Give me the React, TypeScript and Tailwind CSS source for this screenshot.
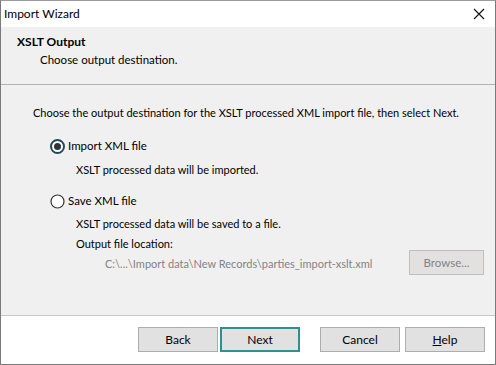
import React from "react";

const font = { fontFamily: 'Lato, "Noto Sans", sans-serif' };

function Radio({ checked }: { checked: boolean }) {
  return checked ? (
    <svg width="15" height="15" viewBox="0 0 15 15" className="shrink-0">
      <circle cx="7.5" cy="7.5" r="6.5" fill="#ffffff" stroke="#1f4a5b" strokeWidth="2" />
      <circle cx="7.5" cy="7.5" r="3.5" fill="#333333" />
    </svg>
  ) : (
    <svg width="15" height="15" viewBox="0 0 15 15" className="shrink-0">
      <circle cx="7.5" cy="7.5" r="6.5" fill="#ffffff" stroke="#333333" strokeWidth="1.2" />
    </svg>
  );
}

function Btn({ children, primary }: { children: React.ReactNode; primary?: boolean }) {
  return (
    <div
      className={
        "w-[80px] h-[25px] flex items-center justify-center bg-[#e1e1e1] text-[12px] text-black " +
        (primary ? "border-2 border-[#2a9294]" : "border border-[#adadad]")
      }
    >
      {children}
    </div>
  );
}

export default function App() {
  return (
    <div className="w-[496px] h-[365px] flex flex-col border border-[#7a7a7a] border-t-[#9a9a9a] bg-white text-[11.5px] text-black overflow-hidden whitespace-nowrap" style={font}>
      {/* Title bar */}
      <div className="h-[26px] flex items-center justify-between bg-white pl-[3px] pr-[8px]">
        <span className="text-[12px] leading-none">Import Wizard</span>
        <svg width="12" height="12" viewBox="0 0 12 12" className="mr-[2px]">
          <path d="M1 1 L11 11 M11 1 L1 11" stroke="#111" strokeWidth="1.1" />
        </svg>
      </div>
      {/* Header */}
      <div className="h-[58px] bg-[#f0f0f0] border-b border-[#b4b4b4] flex flex-col pl-[16px] pt-[7px]">
        <div className="font-bold text-[12px] leading-[16px]">XSLT Output</div>
        <div className="pl-[23px] mt-[2px] leading-[16px]">Choose output destination.</div>
      </div>
      {/* Content */}
      <div className="h-[231px] bg-[#f0f0f0] border-b border-[#c8c8c8] flex flex-col pl-[32px] pr-[11px] pt-[20px] text-[11px]">
        <div className="leading-[16px]">
          Choose the output destination for the XSLT processed XML import file, then select Next.
        </div>
        <div className="flex items-center gap-[3px] pl-[17px] mt-[17px] leading-[16px] text-[11.5px]">
          <Radio checked />
          <span>Import XML file</span>
        </div>
        <div className="pl-[43px] mt-[8px] leading-[16px]">XSLT processed data will be imported.</div>
        <div className="flex items-center gap-[3px] pl-[17px] mt-[15px] leading-[16px] text-[11.5px]">
          <Radio checked={false} />
          <span>Save XML file</span>
        </div>
        <div className="pl-[43px] mt-[7px] leading-[16px]">XSLT processed data will be saved to a file.</div>
        <div className="pl-[43px] mt-[4px] leading-[16px]">Output file location:</div>
        <div className="flex items-center justify-between pl-[72px] mt-[-2px]">
          <span className="text-[#838383] leading-[16px] mt-[2px]">C:\...\Import data\New Records\parties_import-xslt.xml</span>
          <div className="w-[75px] h-[25px] flex items-center justify-center bg-[#e3e0e0] border border-[#bfbfbf] text-[#838383] text-[11.5px]">
            Browse...
          </div>
        </div>
      </div>
      {/* Footer */}
      <div className="flex-1 bg-white flex items-start pt-[11px] pl-[137px]">
        <Btn>Back</Btn>
        <div className="ml-[2px]">
          <Btn primary>Next</Btn>
        </div>
        <div className="ml-[20px]">
          <Btn>Cancel</Btn>
        </div>
        <div className="ml-[5px]">
          <Btn>
            <span><span className="underline">H</span>elp</span>
          </Btn>
        </div>
      </div>
    </div>
  );
}
